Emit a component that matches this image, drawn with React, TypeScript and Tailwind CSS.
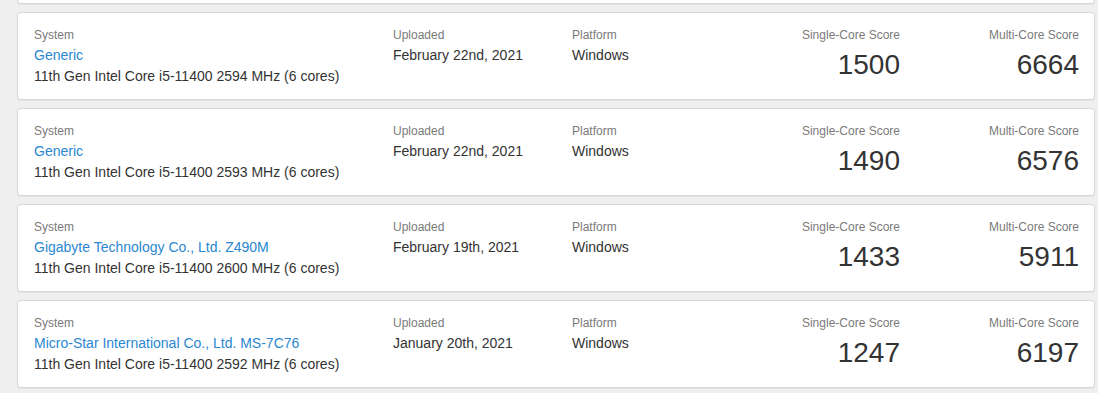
import React from "react";

type Row = {
  system: string;
  cpu: string;
  uploaded: string;
  platform: string;
  single: number;
  multi: number;
};

const rows: Row[] = [
  {
    system: "Generic",
    cpu: "11th Gen Intel Core i5-11400 2594 MHz (6 cores)",
    uploaded: "February 22nd, 2021",
    platform: "Windows",
    single: 1500,
    multi: 6664,
  },
  {
    system: "Generic",
    cpu: "11th Gen Intel Core i5-11400 2593 MHz (6 cores)",
    uploaded: "February 22nd, 2021",
    platform: "Windows",
    single: 1490,
    multi: 6576,
  },
  {
    system: "Gigabyte Technology Co., Ltd. Z490M",
    cpu: "11th Gen Intel Core i5-11400 2600 MHz (6 cores)",
    uploaded: "February 19th, 2021",
    platform: "Windows",
    single: 1433,
    multi: 5911,
  },
  {
    system: "Micro-Star International Co., Ltd. MS-7C76",
    cpu: "11th Gen Intel Core i5-11400 2592 MHz (6 cores)",
    uploaded: "January 20th, 2021",
    platform: "Windows",
    single: 1247,
    multi: 6197,
  },
];

const cardBase =
  "w-[1078px] h-[88px] shrink-0 bg-white border border-[#d9d9d9] rounded-[4px] shadow-[0_1px_1px_rgba(0,0,0,0.06)]";

function Card({ r }: { r: Row }) {
  return (
    <div className={`${cardBase} pl-[16px] pr-[15px] pt-[12px] grid grid-cols-[359px_179px_150px_178px_179px]`}>
      <div>
        <div className="text-[12px] leading-[20px] text-[#7a7a7a]">System</div>
        <div className="text-[14px] leading-[21px] text-[#2a87d0] whitespace-nowrap">{r.system}</div>
        <div className="text-[14px] leading-[21px] text-[#333] whitespace-nowrap">{r.cpu}</div>
      </div>
      <div>
        <div className="text-[12px] leading-[20px] text-[#7a7a7a]">Uploaded</div>
        <div className="text-[14px] leading-[21px] text-[#333] whitespace-nowrap">{r.uploaded}</div>
      </div>
      <div>
        <div className="text-[12px] leading-[20px] text-[#7a7a7a]">Platform</div>
        <div className="text-[14px] leading-[21px] text-[#333]">{r.platform}</div>
      </div>
      <div className="text-right">
        <div className="text-[12px] leading-[20px] text-[#7a7a7a] whitespace-nowrap">Single-Core Score</div>
        <div className="text-[28px] leading-[36px] mt-[2px] text-[#333]">{r.single}</div>
      </div>
      <div className="text-right">
        <div className="text-[12px] leading-[20px] text-[#7a7a7a] whitespace-nowrap">Multi-Core Score</div>
        <div className="text-[28px] leading-[36px] mt-[2px] text-[#333]">{r.multi}</div>
      </div>
    </div>
  );
}

export default function App() {
  return (
    <div
      className="w-[1098px] h-[393px] overflow-hidden bg-[#efefef]"
      style={{ fontFamily: '"Liberation Sans", Arial, sans-serif' }}
    >
      <div className="pl-[17px] mt-[-84px] flex flex-col gap-[8px]">
        <div className={cardBase} />
        {rows.map((r, i) => (
          <Card key={i} r={r} />
        ))}
      </div>
    </div>
  );
}
